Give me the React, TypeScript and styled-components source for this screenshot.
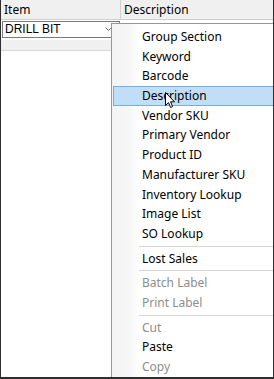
import React from 'react'
import styled, { createGlobalStyle } from 'styled-components'

const GlobalStyle = createGlobalStyle`
  html, body {
    margin: 0;
    padding: 0;
    background: #fff;
  }
  * {
    box-sizing: border-box;
  }
`

const UI_FONT = `"Segoe UI", "Noto Sans", sans-serif`

const Frame = styled.div`
  position: relative;
  width: 274px;
  height: 379px;
  overflow: hidden;
  background: #fff;
  border-left: 1px solid #2e2e2e;
  border-right: 1px solid #2e2e2e;
  border-bottom: 2px solid #2e2e2e;
  display: flex;
  flex-direction: column;
`

const Header = styled.div`
  display: flex;
  height: 20px;
  background: #f0f0f0;
  border-bottom: 1px solid #cfcfcf;
  font-family: ${UI_FONT};
  font-size: 12px;
  color: #000;
`

const HeaderCell = styled.div<{ w?: number }>`
  width: ${p => (p.w ? `${p.w}px` : 'auto')};
  flex: ${p => (p.w ? 'none' : '1')};
  padding-left: 3px;
  line-height: 19px;
  border-right: ${p => (p.w ? '1px solid #d2d2d2' : 'none')};
`

const Row = styled.div`
  height: 20px;
  padding: 1px 0 0 1px;
`

const Combo = styled.div`
  position: relative;
  width: 118px;
  height: 17px;
  border: 1px solid #7a7a7a;
  background: #fff;
  font-family: "Liberation Sans", Arial, sans-serif;
  font-size: 12px;
  line-height: 15px;
  padding-left: 2px;
  color: #000;
`

const Chevron = styled.svg`
  position: absolute;
  right: 7px;
  top: 5px;
`

const NewRow = styled.div`
  height: 11px;
  background: #f0f0f0;
  border-bottom: 1px solid #d8d8d8;
`

const Body = styled.div`
  flex: 1;
  background: #fff;
`

const Menu = styled.div`
  position: absolute;
  left: 110px;
  top: 23px;
  width: 200px;
  height: 400px;
  padding: 3px 0 0 1px;
  border: 1px solid #979797;
  background: linear-gradient(
    to right,
    #f3f3f3 0px,
    #f7f7f7 18px,
    #fbfbfb 22px,
    #fdfdfd 26px,
    #fff 30px
  );
  font-family: ${UI_FONT};
  font-size: 12px;
`

const Item = styled.div<{ disabled?: boolean; active?: boolean }>`
  position: relative;
  height: 19.7px;
  line-height: 19.7px;
  padding-left: 29px;
  color: ${p => (p.disabled ? '#8d8d8d' : '#000')};
  background: ${p => (p.active ? '#c2def6' : 'transparent')};
  outline: ${p => (p.active ? '1px solid #6fb0ea' : 'none')};
  outline-offset: -1px;
  white-space: nowrap;
`

const Separator = styled.div`
  height: 5px;
  padding-top: 2px;
  margin-left: 26px;
  &::after {
    content: '';
    display: block;
    height: 1px;
    background: #d7d7d7;
  }
`

const Cursor = styled.svg`
  position: absolute;
  left: 52px;
  top: 6px;
`

type Entry = { label?: string; disabled?: boolean; active?: boolean; sep?: boolean }

const entries: Entry[] = [
  { label: 'Group Section' },
  { label: 'Keyword' },
  { label: 'Barcode' },
  { label: 'Description', active: true },
  { label: 'Vendor SKU' },
  { label: 'Primary Vendor' },
  { label: 'Product ID' },
  { label: 'Manufacturer SKU' },
  { label: 'Inventory Lookup' },
  { label: 'Image List' },
  { label: 'SO Lookup' },
  { sep: true },
  { label: 'Lost Sales' },
  { sep: true },
  { label: 'Batch Label', disabled: true },
  { label: 'Print Label', disabled: true },
  { sep: true },
  { label: 'Cut', disabled: true },
  { label: 'Paste' },
  { label: 'Copy', disabled: true },
]

export default function App() {
  return (
    <>
      <GlobalStyle />
      <Frame>
        <Header>
          <HeaderCell w={120}>Item</HeaderCell>
          <HeaderCell>Description</HeaderCell>
        </Header>
        <Row>
          <Combo>
            DRILL BIT
            <Chevron width="7" height="5" viewBox="0 0 7 5">
              <polyline points="0.5,0.5 3.5,3.5 6.5,0.5" fill="none" stroke="#6a6a6a" strokeWidth="1" />
            </Chevron>
          </Combo>
        </Row>
        <NewRow />
        <Body />
        <Menu>
          {entries.map((e, i) =>
            e.sep ? (
              <Separator key={i} />
            ) : (
              <Item key={i} disabled={e.disabled} active={e.active}>
                {e.label}
                {e.active && (
                  <Cursor width="12" height="18" viewBox="0 0 12 18">
                    <path
                      d="M0.5,0.5 L0.5,13.5 L3.5,10.6 L5.6,15.5 L7.6,14.6 L5.6,9.8 L9.5,9.8 Z"
                      fill="#fff"
                      stroke="#000"
                      strokeWidth="1"
                      strokeLinejoin="miter"
                    />
                  </Cursor>
                )}
              </Item>
            )
          )}
        </Menu>
      </Frame>
    </>
  )
}
